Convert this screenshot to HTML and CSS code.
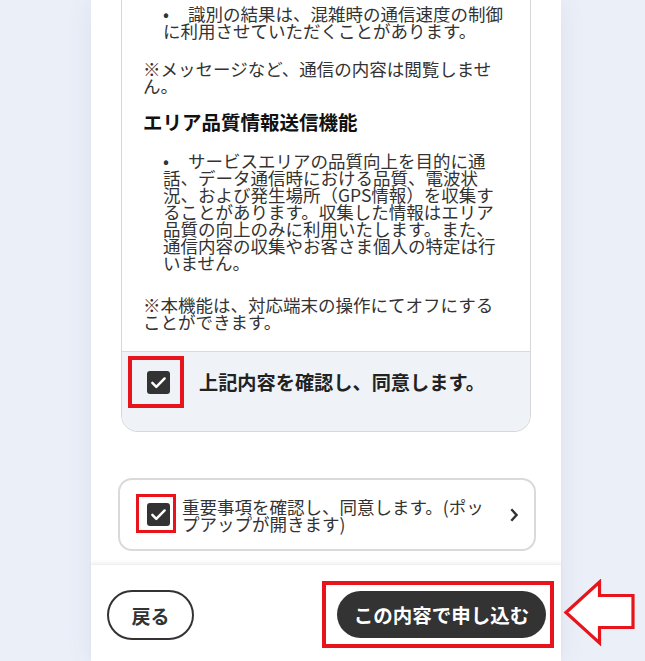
FILE: index.html
```html
<!DOCTYPE html>
<html lang="ja">
<head>
  <meta charset="UTF-8">
  <title>お申し込み内容の確認</title>
  <meta name="viewport" content="width=device-width, initial-scale=1.0">
  <link rel="stylesheet" href="styles.css">
</head>
<body>
  <div class="panel">
    <div class="terms">
      <div class="terms-body">
        <ul class="list">
          <li><span class="dot">•</span>識別の結果は、混雑時の通信速度の制御<br>に利用させていただくことがあります。</li>
        </ul>
        <p class="note">※メッセージなど、通信の内容は閲覧しませ<br>ん。</p>

        <h3>エリア品質情報送信機能</h3>
        <ul class="list">
          <li><span class="dot">•</span>サービスエリアの品質向上を目的に通<br>話、データ通信時における品質、電波状<br>況、および発生場所（GPS情報）を収集す<br>ることがあります。収集した情報はエリア<br>品質の向上のみに利用いたします。また、<br>通信内容の収集やお客さま個人の特定は行<br>いません。</li>
        </ul>
        <p class="note last">※本機能は、対応端末の操作にてオフにする<br>ことができます。</p>
      </div>

      <!-- 同意チェック -->
      <label class="confirm">
        <span class="check-wrap">
          <span class="check">
            <svg viewBox="0 0 24 24" width="23" height="23"><path d="M5.6 12.4l4.1 4.1 8.7-8.7" fill="none" stroke="#fff" stroke-width="2.6" stroke-linecap="round" stroke-linejoin="round"/></svg>
          </span>
          <span class="mark mark-a"></span>
        </span>
        <span class="confirm-text">上記内容を確認し、同意します。</span>
      </label>
    </div>

    <div class="agree">
      <span class="check-wrap">
        <span class="check">
          <svg viewBox="0 0 24 24" width="23" height="23"><path d="M5.6 12.4l4.1 4.1 8.7-8.7" fill="none" stroke="#fff" stroke-width="2.6" stroke-linecap="round" stroke-linejoin="round"/></svg>
        </span>
        <span class="mark mark-b"></span>
      </span>
      <span class="agree-text">重要事項を確認し、同意します。(ポッ<br>プアップが開きます)</span>
      <svg class="chevron" viewBox="0 0 8 14" width="8" height="14"><path d="M1.3 1.3L6.5 7l-5.2 5.7" fill="none" stroke="#333" stroke-width="2.4"/></svg>
    </div>

    <div class="actions">
      <button class="btn-back">戻る</button>
      <span class="submit-wrap">
        <button class="btn-submit">この内容で申し込む</button>
        <span class="mark mark-c"></span>
      </span>
    </div>
  </div>

  <svg class="arrow" viewBox="0 0 74 68" width="74" height="68">
    <polygon points="3,33.5 36.5,3 36.5,16.5 70,16.5 70,48.5 36.5,48.5 36.5,64" fill="#fff" stroke="#e8141c" stroke-width="3.2" stroke-linejoin="miter"/>
  </svg>
</body>
</html>
```

FILE: styles.css
```css
* {
  box-sizing: border-box;
}

body {
  margin: 0;
  background: #ebeff8;
  font-family: "Noto Sans CJK JP", "Noto Sans", sans-serif;
  color: #333;
  height: 661px;
  overflow: hidden;
  position: relative;
}

.panel {
  width: 470px;
  height: 661px;
  margin-left: 91px;
  padding: 0 30px;
  background: #fff;
  box-shadow: 0 0 26px rgba(70, 90, 130, 0.09);
  display: flex;
  flex-direction: column;
}

.terms {
  border: 1px solid #d7d7d7;
  border-top: none;
  border-radius: 0 0 17px 17px;
  overflow: hidden;
}

.terms-body {
  padding: 5px 21px 21px 21px;
  font-size: 17.5px;
  line-height: 17px;
  color: #333;
}

.list {
  list-style: none;
  margin: 0;
  padding: 0 0 0 20px;
}

.dot {
  display: inline-block;
  width: 25px;
}

.note {
  margin: 21px 0 0;
}

.note.last {
  margin-top: 25px;
}

.terms-body h3 {
  margin: 16px 0 18px;
  font-size: 19.5px;
  line-height: 24px;
  font-weight: bold;
  color: #111;
}

.confirm {
  display: flex;
  align-items: center;
  gap: 29px;
  padding: 18px 20px 37px 25px;
  background: #eff2f7;
  border-top: 1px solid #d9d9d9;
}

.confirm-text {
  font-size: 19.2px;
  line-height: 24px;
  font-weight: bold;
  color: #222;
}

.check-wrap {
  position: relative;
  display: block;
  flex: none;
  width: 23px;
  height: 23px;
}

.check {
  display: block;
  width: 23px;
  height: 23px;
  background: #333;
  border-radius: 3px;
}

.check svg {
  display: block;
}

/* 赤枠の注記 */
.mark {
  position: absolute;
  border: 4px solid #e8141c;
  pointer-events: none;
}

.mark-a {
  top: -15px;
  left: -19px;
  right: -14px;
  bottom: -14px;
}

.mark-b {
  top: -9px;
  left: -11px;
  right: -6px;
  bottom: -7px;
  border-width: 3.5px;
}

.agree {
  margin: 46px -5px 0 -3px;
  height: 73px;
  border: 2px solid #dadada;
  border-radius: 14px;
  padding: 0 16px 0 27px;
  display: flex;
  align-items: center;
  gap: 12px;
}

.agree-text {
  flex: 1;
  font-size: 17.5px;
  line-height: 17px;
  color: #333;
}

.chevron {
  flex: none;
  display: block;
}

.actions {
  margin: 13px -30px 0;
  flex: 1;
  padding: 25px 15px 0 16px;
  display: flex;
  justify-content: space-between;
  align-items: flex-start;
  box-shadow: 0 -2px 3px rgba(0, 0, 0, 0.05);
  border-top: 1px solid #f0f0f0;
}

.actions button {
  font-family: inherit;
  font-weight: bold;
  border-radius: 26px;
  cursor: pointer;
}

.btn-back {
  width: 87px;
  height: 50px;
  background: #fff;
  border: 2px solid #333;
  color: #333;
  font-size: 19px;
}

.submit-wrap {
  position: relative;
  display: block;
  margin-top: 1px;
}

.btn-submit {
  display: block;
  width: 209px;
  height: 47px;
  background: #333;
  border: none;
  color: #fff;
  font-size: 19.5px;
}

.mark-c {
  top: -10px;
  left: -15px;
  right: -8px;
  bottom: -10px;
}

.arrow {
  position: absolute;
  left: 563px;
  top: 579px;
  display: block;
}
```
